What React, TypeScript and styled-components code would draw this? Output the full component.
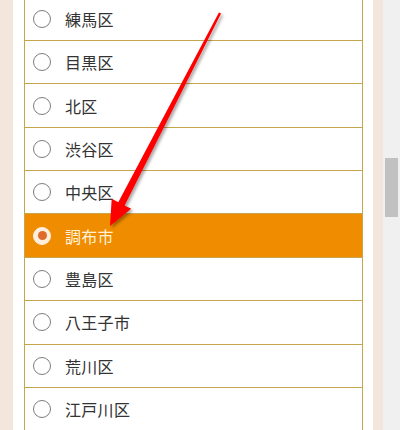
import React from "react";
import styled, { createGlobalStyle } from "styled-components";

const Global = createGlobalStyle`
  html, body { margin: 0; padding: 0; overflow: hidden; background: #ffffff; }
  body { font-family: "Noto Sans CJK JP", "Noto Sans", sans-serif; }
`;

const Page = styled.div`
  position: relative;
  display: flex;
  width: 400px;
  height: 430px;
  overflow: hidden;
  background: #ffffff;
`;

const Strip = styled.div<{ $w: number }>`
  flex: 0 0 ${(p) => p.$w}px;
  background: #f3e6dd;
`;

const Gutter = styled.div<{ $w: number }>`
  flex: 0 0 ${(p) => p.$w}px;
  background: #ffffff;
`;

const List = styled.ul`
  flex: 0 0 339px;
  box-sizing: border-box;
  margin: -2.4px 0 0 0;
  padding: 0;
  list-style: none;
  border-left: 1px solid #c6a64c;
  border-right: 1px solid #c6a64c;
  align-self: flex-start;
`;

const Row = styled.li<{ $selected?: boolean }>`
  display: flex;
  align-items: center;
  gap: 14px;
  box-sizing: border-box;
  height: 43.375px;
  padding-left: 8px;
  border-bottom: 1px solid #c6a64c;
  background: ${(p) => (p.$selected ? "#ef8c00" : "#ffffff")};
  color: ${(p) => (p.$selected ? "#fff2d6" : "#333333")};
  font-size: 16px;
  letter-spacing: 0.3px;
`;

const Radio = styled.span<{ $selected?: boolean }>`
  position: relative;
  flex: 0 0 auto;
  box-sizing: border-box;
  width: 18px;
  height: 18px;
  border-radius: 50%;
  border: 1px solid ${(p) => (p.$selected ? "#fdeedd" : "#7d7d7d")};
  background: ${(p) => (p.$selected ? "#fdeedd" : "#ffffff")};
  display: flex;
  align-items: center;
  justify-content: center;
  &::after {
    content: "";
    display: ${(p) => (p.$selected ? "block" : "none")};
    width: 9px;
    height: 9px;
    border-radius: 50%;
    background: #e06a2c;
  }
`;

const Label = styled.span`
  line-height: 1;
`;

const Scrollbar = styled.div`
  flex: 0 0 17px;
  background: #f0f0f0;
  display: flex;
  justify-content: center;
`;

const Thumb = styled.div`
  width: 13px;
  height: 59px;
  margin-top: 158px;
  background: #c1c1c1;
`;

const Overlay = styled.svg`
  position: absolute;
  left: 0;
  top: 0;
  pointer-events: none;
`;

const items = [
  "練馬区",
  "目黒区",
  "北区",
  "渋谷区",
  "中央区",
  "調布市",
  "豊島区",
  "八王子市",
  "荒川区",
  "江戸川区",
];

function Arrow() {
  const sx = 220,
    sy = 13,
    tx = 110,
    ty = 226;
  const dx = tx - sx,
    dy = ty - sy;
  const len = Math.hypot(dx, dy);
  const ux = dx / len,
    uy = dy / len;
  const px = -uy,
    py = ux;
  const headLen = 25;
  const bx = tx - ux * headLen,
    by = ty - uy * headLen;
  const shaftStart = 1.2,
    shaftEnd = 3.6,
    wing = 11;
  const pts = [
    [sx + px * shaftStart, sy + py * shaftStart],
    [bx + px * shaftEnd, by + py * shaftEnd],
    [bx + px * wing, by + py * wing],
    [tx, ty],
    [bx - px * wing, by - py * wing],
    [bx - px * shaftEnd, by - py * shaftEnd],
    [sx - px * shaftStart, sy - py * shaftStart],
  ]
    .map((p) => p.map((v) => v.toFixed(2)).join(","))
    .join(" ");
  return (
    <Overlay width="400" height="430" viewBox="0 0 400 430">
      <defs>
        <filter id="sh" x="-20%" y="-20%" width="140%" height="140%">
          <feDropShadow dx="2" dy="2" stdDeviation="1.6" floodColor="#000" floodOpacity="0.35" />
        </filter>
      </defs>
      <polygon points={pts} fill="#ff0000" strokeLinejoin="round" filter="url(#sh)" />
    </Overlay>
  );
}

export default function App() {
  return (
    <>
      <Global />
      <Page>
        <Strip $w={13} />
        <Gutter $w={11} />
        <List>
          {items.map((name) => {
            const sel = name === "調布市";
            return (
              <Row key={name} $selected={sel}>
                <Radio $selected={sel} />
                <Label>{name}</Label>
              </Row>
            );
          })}
        </List>
        <Gutter $w={10} />
        <Strip $w={10} />
        <Scrollbar>
          <Thumb />
        </Scrollbar>
        <Arrow />
      </Page>
    </>
  );
}
